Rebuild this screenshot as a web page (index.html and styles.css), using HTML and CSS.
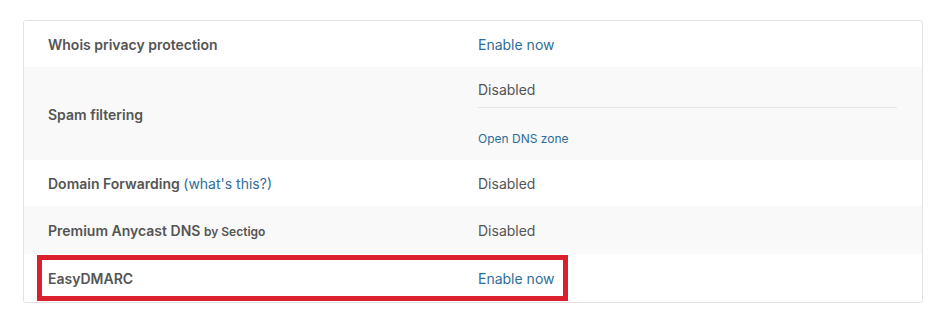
FILE: index.html
```html
<!DOCTYPE html>
<html lang="en">
<head>
<meta charset="utf-8">
<title>Domain services</title>
<link rel="stylesheet" href="styles.css">
</head>
<body>
<div class="card">
  <div class="row">
    <div class="label">Whois privacy protection</div>
    <div class="value"><a class="link" href="#">Enable now</a></div>
  </div>
  <div class="row row-alt row-tall">
    <div class="label">Spam filtering</div>
    <div class="value value-stack">
      <div class="status">Disabled</div>
      <div class="divider"></div>
      <a class="link link-small" href="#">Open DNS zone</a>
    </div>
  </div>
  <div class="row">
    <div class="label">Domain Forwarding <a class="link link-normal" href="#">(what's this?)</a></div>
    <div class="value">Disabled</div>
  </div>
  <div class="row row-alt row-48">
    <div class="label">Premium Anycast DNS <span class="by">by Sectigo</span></div>
    <div class="value">Disabled</div>
  </div>
  <div class="row row-48 row-highlight">
    <div class="label">EasyDMARC</div>
    <div class="value"><a class="link" href="#">Enable now</a></div>
    <div class="highlight"></div>
  </div>
</div>
</body>
</html>
```

FILE: styles.css
```css
* { box-sizing: border-box; }

html, body {
  margin: 0;
  padding: 0;
  background: #ffffff;
}

body {
  padding: 20px 23px 0 23px;
  width: 946px;
  font-family: "Inter", "Noto Sans", sans-serif;
  font-size: 14px;
  color: #555555;
}

.card {
  width: 900px;
  border: 1px solid #e2e2e2;
  border-radius: 3px;
  background: #ffffff;
  overflow: hidden;
}

.row {
  display: flex;
  align-items: center;
  height: 46px;
  padding: 2px 24px 0 24px;
  background: #ffffff;
}

.row-alt {
  background: #f9f9f9;
}

.row-tall {
  height: 93px;
}

.row-48 {
  height: 48px;
}

.label {
  width: 430px;
  flex: none;
  font-weight: 600;
  color: #555555;
  line-height: 18px;
}

.value {
  flex: 1;
  line-height: 18px;
  color: #555555;
}

.value-stack {
  align-self: stretch;
  display: flex;
  flex-direction: column;
  padding-top: 12px;
  padding-right: 1px;
}

.divider {
  height: 1px;
  background: #e4e4e4;
  margin: 8px 0 23px 0;
}

.link {
  color: #2e6d9b;
  text-decoration: none;
  font-weight: 400;
}

.link-small {
  font-size: 12px;
  line-height: 15px;
}

.link-normal {
  font-weight: 400;
}

.by {
  font-size: 12px;
  font-weight: 600;
}

.row-highlight {
  position: relative;
}

.highlight {
  position: absolute;
  left: 13px;
  top: 1px;
  width: 531px;
  height: 46px;
  border: 5px solid #d9202c;
  pointer-events: none;
}
```
